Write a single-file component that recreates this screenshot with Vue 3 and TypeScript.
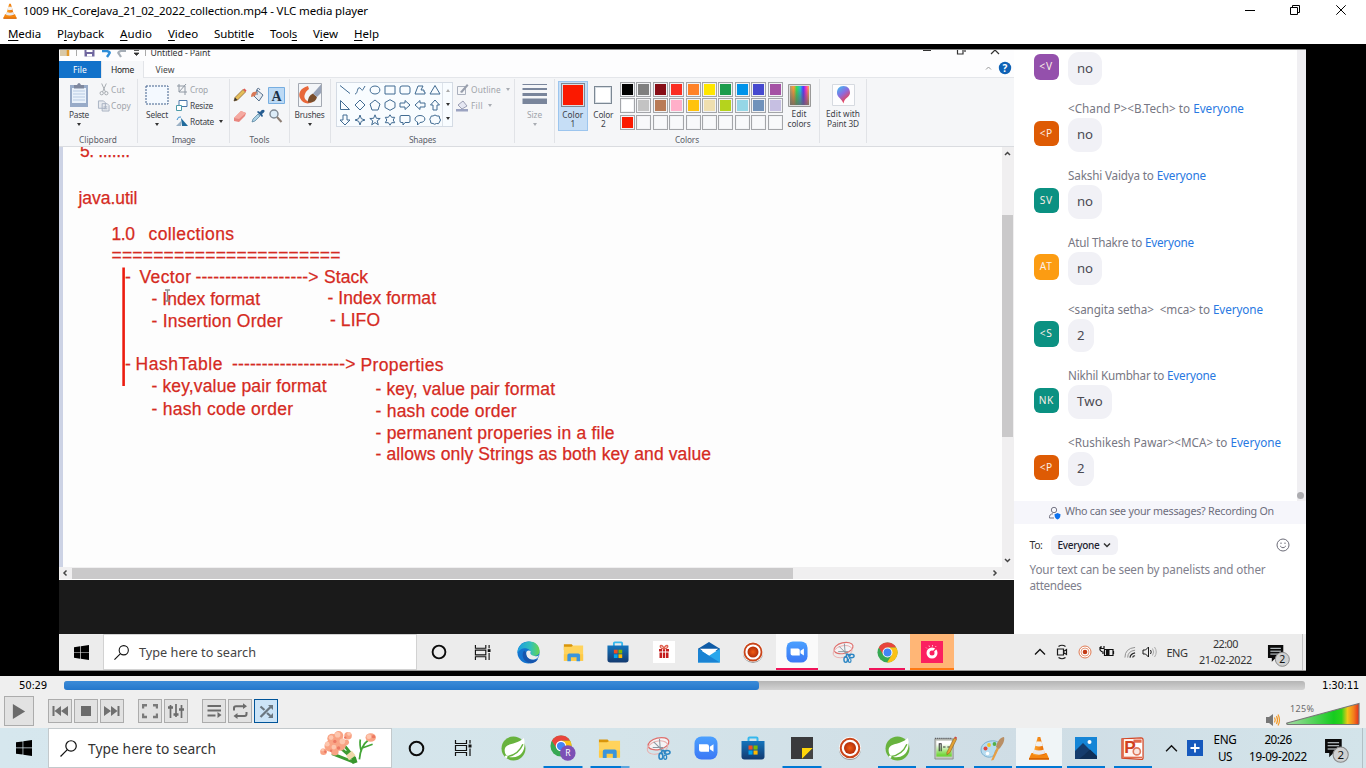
<script setup lang="ts">
interface MenuEntry { pre: string; key: string; post: string; w: number }
interface Message { who: string; initials: string; color: string; text: string; w: number; iw: number; tw: number }
interface TaskItem { icon: string; w: number; size: number; line?: number; state?: string }
interface Note { x: number; y: number; w: number; t: string }

// Spreads the letters of a label so that it takes exactly the given width.
const vFit = {
  mounted(el: HTMLElement, binding: { value: number }) {
    const count = (el.textContent || '').length
    const natural = el.getBoundingClientRect().width
    if (count > 0) el.style.letterSpacing = ((binding.value - natural) / count).toFixed(3) + 'px'
  },
}

const menu: MenuEntry[] = [
  { pre: '', key: 'M', post: 'edia', w: 33 },
  { pre: 'P', key: 'l', post: 'ayback', w: 47 },
  { pre: '', key: 'A', post: 'udio', w: 32 },
  { pre: '', key: 'V', post: 'ideo', w: 30 },
  { pre: 'Subti', key: 't', post: 'le', w: 40 },
  { pre: 'Tool', key: 's', post: '', w: 27 },
  { pre: 'V', key: 'i', post: 'ew', w: 25 },
  { pre: '', key: 'H', post: 'elp', w: 25 },
]

const messages: Message[] = [
  { who: '', initials: '<V', color: '#9450ac', text: 'no', w: 0, iw: 14, tw: 16 },
  { who: '<Chand P><B.Tech>', initials: '<P', color: '#de5b04', text: 'no', w: 176, iw: 13, tw: 16 },
  { who: 'Sakshi Vaidya', initials: 'SV', color: '#0b9182', text: 'no', w: 138, iw: 13, tw: 16 },
  { who: 'Atul Thakre', initials: 'AT', color: '#fc9c12', text: 'no', w: 126, iw: 13, tw: 16 },
  { who: '<sangita setha>  <mca>', initials: '<S', color: '#0b9182', text: '2', w: 195, iw: 13, tw: 8 },
  { who: 'Nikhil Kumbhar', initials: 'NK', color: '#0b9182', text: 'Two', w: 148, iw: 15, tw: 26 },
  { who: '<Rushikesh Pawar><MCA>', initials: '<P', color: '#de5b04', text: '2', w: 213, iw: 13, tw: 8 },
]

const palette: string[] = [
  '#000000', '#7f7f7f', '#870d16', '#fb2e22', '#ff8227', '#ffe600', '#1c9c4c', '#0093ea', '#4549cf', '#a552a5',
  '#ffffff', '#c3c3c3', '#b97b57', '#ffafc9', '#ffc30d', '#efdfaf', '#b5d31d', '#95d6e6', '#7092bb', '#c6bfe2',
  '#fb1900', '', '', '', '', '', '', '', '', '',
]

const notes: Note[] = [
  { x: 80, y: 157.3, w: 50, t: '5. .......' },
  { x: 78.5, y: 204.3, w: 59, t: 'java.util' },
  { x: 111.5, y: 240.2, w: 23.5, t: '1.0' },
  { x: 148.5, y: 240.2, w: 85.5, t: 'collections' },
  { x: 111.5, y: 260.6, w: 229, t: '======================' },
  { x: 125, y: 283, w: 6, t: '-' },
  { x: 139.5, y: 283, w: 51.5, t: 'Vector' },
  { x: 195.5, y: 283, w: 123, t: '------------------->' },
  { x: 324, y: 283, w: 44, t: 'Stack' },
  { x: 151.5, y: 304.7, w: 108.5, t: '- Index format' },
  { x: 327.5, y: 303.5, w: 108.5, t: '- Index format' },
  { x: 151.5, y: 326.5, w: 131, t: '- Insertion Order' },
  { x: 330, y: 325.6, w: 50, t: '- LIFO' },
  { x: 125, y: 369.7, w: 6, t: '-' },
  { x: 135.5, y: 369.7, w: 87, t: 'HashTable' },
  { x: 232, y: 370, w: 123.5, t: '------------------->' },
  { x: 360.5, y: 370.5, w: 83, t: 'Properties' },
  { x: 151.5, y: 391.5, w: 175, t: '- key,value pair format' },
  { x: 151.5, y: 414.5, w: 141.5, t: '- hash code order' },
  { x: 375.5, y: 395.4, w: 179.5, t: '- key, value pair format' },
  { x: 375.5, y: 416.6, w: 141, t: '- hash code order' },
  { x: 375.5, y: 438.5, w: 239, t: '- permanent properies in a file' },
  { x: 375.5, y: 460, w: 335.5, t: '- allows only Strings as both key and value' },
]

const innerTasks: TaskItem[] = [
  { icon: 'cortana', w: 43, size: 16 },
  { icon: 'taskview', w: 45, size: 17 },
  { icon: 'edge', w: 47, size: 23 },
  { icon: 'folder', w: 43, size: 21 },
  { icon: 'store', w: 46, size: 22 },
  { icon: 'gift', w: 45, size: 22 },
  { icon: 'mail', w: 45, size: 22 },
  { icon: 'record', w: 44, size: 22 },
  { icon: 'zoomapp', w: 44, size: 22, line: 42, state: 'active' },
  { icon: 'snip', w: 48, size: 23 },
  { icon: 'chrome', w: 40, size: 21, line: 36 },
  { icon: 'disc', w: 50, size: 22, line: 44, state: 'alert' },
]

const outerTasks: TaskItem[] = [
  { icon: 'cortana', w: 48, size: 17 },
  { icon: 'taskview', w: 46, size: 18 },
  { icon: 'spring', w: 54, size: 25 },
  { icon: 'chromeuser', w: 45, size: 26, line: 39 },
  { icon: 'folder', w: 49, size: 23, line: 39, state: 'multi' },
  { icon: 'snip', w: 49, size: 25 },
  { icon: 'zoomapp', w: 46, size: 24 },
  { icon: 'store', w: 48, size: 24 },
  { icon: 'sticky', w: 50, size: 22, line: 39 },
  { icon: 'record', w: 46, size: 24 },
  { icon: 'spring', w: 48, size: 25, line: 38 },
  { icon: 'npp', w: 48, size: 24, line: 38 },
  { icon: 'palette', w: 47, size: 25, line: 38 },
  { icon: 'cone', w: 46, size: 24, line: 46, state: 'active' },
  { icon: 'photos', w: 48, size: 22, line: 38 },
  { icon: 'ppt', w: 45, size: 23, line: 38 },
]

const controls: string[][] = [['prev', 'stop', 'next'], ['full', 'eq'], ['list', 'loop', 'shuffle']]

const shapes: string[] = [
  'M1 1.5 11 9.5', 'M1 10C4 10 3 2 6 4S7 9 11 2', 'M6 2C12.500 2 12.500 10 6 10S-.5 2 6 2Z', 'M1 2H11V10H1Z',
  'M3 2H9Q11 2 11 4V8Q11 10 9 10H3Q1 10 1 8V4Q1 2 3 2Z', 'M1 10 4 2H9L7 6H10V8H11V10Z', 'M6 1.500 11 10H1Z',
  'M1.500 1.500 10.500 10.500H1.500Z', 'M6 1 11 6 6 11 1 6Z', 'M6 1 11 5 9 11H3L1 5Z', 'M6 0.700 11 3.500V8.500L6 11.300 1 8.500V3.500Z',
  'M1 4H6V1.500L11 6 6 10.500V8H1Z', 'M11 4H6V1.500L1 6 6 10.500V8H11Z', 'M4 11V6H1.500L6 1 10.500 6H8V11Z',
  'M4 1V6H1L6 11 11 6H8V1Z', 'M6 1 7.300 4.700 11 6 7.300 7.300 6 11 4.700 7.300 1 6 4.700 4.700Z',
  'M6 .8 7.400 4.300 11.200 4.500 8.200 6.900 9.300 10.800 6 8.600 2.700 10.800 3.800 6.900 .8 4.500 4.600 4.300Z',
  'M6 .8 7.600 3.300H10.700L9.200 6 10.700 8.700H7.600L6 11.200 4.400 8.700H1.300L2.800 6 1.300 3.300H4.400Z',
  'M2 1.500H10Q11 1.500 11 3V7Q11 8.500 10 8.500H6L4 11V8.500H2Q1 8.500 1 7V3Q1 1.500 2 1.500Z',
  'M6 1.500C12.500 1.500 12.500 8.500 6 8.500L3.500 11 3.500 8C-1 6.500 1 1.500 6 1.500Z',
  'M4 2Q6 0 8 2 11 1 10.500 4 12.500 6 10.500 8 10 10.500 7.500 9.500 5.500 11 4 9.500 1 10 1.500 7 0 5 1.500 3.800 2 1 4 2Z',
]
</script>

<template>
  <div class="screen">
    <svg class="sprite" aria-hidden="true">
      <defs>
        <linearGradient id="gBlue" x1="0" y1="0" x2="0" y2="1"><stop offset="0" stop-color="#1474bc" /><stop offset="1" stop-color="#133a70" /></linearGradient>
        <linearGradient id="gEdge" x1="0" y1="0" x2="1" y2="0"><stop offset="0" stop-color="#1b9de2" /><stop offset=".6" stop-color="#34c1b8" /><stop offset="1" stop-color="#68d54e" /></linearGradient>
        <linearGradient id="gZoom" x1="0" y1="0" x2="0" y2="1"><stop offset="0" stop-color="#4aa0ff" /><stop offset="1" stop-color="#3c78f5" /></linearGradient>
        <linearGradient id="gRainbow"><stop offset="0" stop-color="#a97" /><stop offset=".2" stop-color="#f93" /><stop offset=".35" stop-color="#3d5" /><stop offset=".55" stop-color="#2bd" /><stop offset=".7" stop-color="#53f" /><stop offset=".85" stop-color="#f3b" /><stop offset="1" stop-color="#fa4" /></linearGradient>
        <linearGradient id="gFade" x1="0" y1="0" x2="0" y2="1"><stop offset=".1" stop-color="#555" stop-opacity="0" /><stop offset="1" stop-color="#666" stop-opacity=".8" /></linearGradient>
        <linearGradient id="gPin" x1="0" y1="0" x2=".6" y2="1"><stop offset="0" stop-color="#38c6f4" /><stop offset=".5" stop-color="#8a6be0" /><stop offset="1" stop-color="#ff3a3a" /></linearGradient>
        <linearGradient id="gCone" x1="0" y1="0" x2="1" y2="0"><stop offset="0" stop-color="#ffad33" /><stop offset="1" stop-color="#e76500" /></linearGradient>
        <linearGradient id="gVol"><stop offset="0" stop-color="#a6dca6" /><stop offset=".65" stop-color="#16cc20" /><stop offset=".76" stop-color="#2bd31a" /><stop offset=".84" stop-color="#f0c818" /><stop offset=".93" stop-color="#f37a1c" /><stop offset="1" stop-color="#e32c1c" /></linearGradient>
        <radialGradient id="gRec"><stop offset="0" stop-color="#f05c14" /><stop offset="1" stop-color="#b32d08" /></radialGradient>
        <linearGradient id="gNpp" x1="0" y1="0" x2="0" y2="1"><stop offset=".2" stop-color="#fff" /><stop offset=".9" stop-color="#72d63a" /></linearGradient>
      </defs>
      <symbol id="cone" viewBox="0 0 24 24">
        <path d="M4.500 17H19.500L22 22.500H2Z" fill="#f58610" /><path d="M2 22H22V23.800H2Z" fill="#d86400" />
        <path d="M10.700 1H13.300L18 18.500Q12 21 6 18.500Z" fill="url(#gCone)" />
        <path d="M9.500 5.500H14.500L15.800 9.800Q12 11.300 8.200 9.800Z" fill="#f1f1f1" /><path d="M7.200 13.500Q12 15.500 16.800 13.500L18 17.500Q12 19.800 6 17.500Z" fill="#e9e9ec" />
      </symbol>
      <symbol id="windows" viewBox="0 0 16 16"><path d="M0 2.300 6.600 1.400V7.600H0ZM7.300 1.300 16 0V7.600H7.300ZM0 8.300H6.600V14.600L0 13.700ZM7.300 8.300H16V16L7.300 14.700Z" fill="#000" /></symbol>
      <symbol id="loupe" viewBox="0 0 16 16"><circle cx="10.400" cy="5.600" r="4.900" fill="none" stroke="#111" stroke-width="1.150" /><path d="M6.900 9.100.5 15.500" stroke="#111" stroke-width="1.150" /></symbol>
      <symbol id="cortana" viewBox="0 0 16 16"><circle cx="8" cy="8" r="6.400" fill="none" stroke="#0c0c0c" stroke-width="1.900" /></symbol>
      <symbol id="taskview" viewBox="0 0 18 18"><path d="M1.500 1V4.500H12.500V1M1.500 17V13.500H12.500V17M1.500 6.500H12.500V11.500H1.500ZM16 1V4.500M16 9.500V17" fill="none" stroke="#111" stroke-width="1.200" /><path d="M14.500 5.500H17.500V8.500H14.500Z" fill="#111" /></symbol>
      <symbol id="spring" viewBox="0 0 24 24">
        <circle cx="12" cy="12" r="11.500" fill="#68b33e" />
        <path d="M22 2C24 10 22 20 11 20.500 6 20.500 3.500 18 3.500 14 3.500 6 14 9.500 22 2Z" fill="#fff" /><path d="M5 20C13 19 18 15 21 8" fill="none" stroke="#68b33e" stroke-width="1.400" /><circle cx="5" cy="20" r="1.200" fill="#fff" />
      </symbol>
      <symbol id="chrome" viewBox="0 0 24 24">
        <circle cx="12" cy="12" r="11.500" fill="#36a852" /><path d="M2 6.300A11.500 11.500 0 0 1 22 6.300L12 6.300 7.500 15Z" fill="#e8453c" /><path d="M12 6.300H22A11.500 11.500 0 0 1 11.500 23.500L17 14.700Z" fill="#fbc116" />
        <circle cx="12" cy="12" r="5.700" fill="#fff" /><circle cx="12" cy="12" r="4.500" fill="#4285f4" />
      </symbol>
      <symbol id="chromeuser" viewBox="0 0 26 26">
        <use href="#chrome" x="0" y="0" width="22" height="22" /><circle cx="17.800" cy="18" r="7.800" fill="#7c50b5" /><text x="17.800" y="21.200" font-size="8.500" font-family="Noto Sans, sans-serif" fill="#fff" text-anchor="middle">R</text>
      </symbol>
      <symbol id="folder" viewBox="0 0 24 24">
        <path d="M1 2.500H10L12 5V9H1Z" fill="#d9950a" /><path d="M1 5.500H9.500L12 4H23V21.500H1Z" fill="#ffd35c" /><path d="M1 14H23V21.500H1Z" fill="#ffca45" />
        <path d="M5 22V15Q5 13 7 13H17.500Q19.500 13 19.500 15V22H15.500V17.500H9V22Z" fill="#3b95dc" />
      </symbol>
      <symbol id="store" viewBox="0 0 24 24">
        <path d="M7.500 6V2.500Q7.500 1.500 8.500 1.500H15.500Q16.500 1.500 16.500 2.500V6" fill="none" stroke="#35b8ee" stroke-width="2" /><path d="M.5 5H23.500V20.500Q23.500 23.500 20.500 23.500H3.500Q.5 23.500.5 20.500Z" fill="url(#gBlue)" />
        <path d="M7.500 9.500H11.600V13.600H7.500Z" fill="#f25022" /><path d="M12.500 9.500H16.600V13.600H12.500Z" fill="#7fba00" /><path d="M7.500 14.500H11.600V18.600H7.500Z" fill="#00a4ef" /><path d="M12.500 14.500H16.600V18.600H12.500Z" fill="#ffb900" />
      </symbol>
      <symbol id="edge" viewBox="0 0 24 24">
        <circle cx="12" cy="12" r="11.500" fill="#1474cf" /><path d="M.6 11C2-3 24-3 23.500 11 23.500 16 16 17 14 14.500 16.500 11 12 7 7.500 7.500 4 8 1.500 10 .6 13Z" fill="url(#gEdge)" />
        <path d="M9.500 13C9.500 9.500 13 9 14.500 11 13.500 13 14 14.500 17 15.500 20 16.300 22 15.500 23 14.500 22 18 19 19.500 15.500 19.500 12 19.500 9.500 17 9.500 13Z" fill="#ececec" /><path d="M7.500 10C4 14 6 22 14 23.300 19 23 21 20.500 22 18.500 17 21.500 9 19 9.500 12Z" fill="#1656ae" />
      </symbol>
      <symbol id="gift" viewBox="0 0 22 22"><path d="M0 0H22V22H0Z" fill="#fff" /><path d="M6 8H16V10.500H6ZM6.500 11.500H15.500V17H6.500Z" fill="#c41c1c" /><path d="M11 8C7 8 6.500 4.500 8 4.500S10.500 6 11 8C11.500 6 12.500 4.500 14 4.500S15 8 11 8" fill="none" stroke="#e0604f" stroke-width="1.300" /><path d="M9.500 8V17M12.500 8V17" stroke="#fff" stroke-width=".8" /></symbol>
      <symbol id="mail" viewBox="0 0 24 24"><path d="M0 8.500 12 1 24 8.500V11H0Z" fill="#0f5ba6" /><path d="M2 8.500H22L12 17Z" fill="#fff" /><path d="M0 8.500 12 16 24 8.500V23.500H0Z" fill="#2aa7ec" /><path d="M0 8.500 15 18 24 23.500H0Z" fill="#1b83d3" /></symbol>
      <symbol id="record" viewBox="0 0 24 24"><circle cx="12" cy="13" r="11" fill="#999" /><circle cx="12" cy="12" r="11" fill="#fff" /><circle cx="12" cy="12" r="9.300" fill="none" stroke="#c9451a" stroke-width="2" /><circle cx="12" cy="12" r="6" fill="url(#gRec)" /></symbol>
      <symbol id="zoomapp" viewBox="0 0 24 24"><rect x=".5" y=".5" width="23" height="23" rx="7" fill="url(#gZoom)" /><path d="M5 8.200H13Q15 8.200 15 10.200V15.800H7Q5 15.800 5 13.800ZM15.800 10.700 19.500 8.200V15.800L15.800 13.300Z" fill="#fff" /></symbol>
      <symbol id="snip" viewBox="0 0 26 26">
        <ellipse cx="13" cy="8" rx="11" ry="6" fill="#f4f4f6" stroke="#df6f6c" stroke-width="1.300" transform="rotate(-14 13 8)" /><ellipse cx="12" cy="12" rx="11" ry="6.500" fill="none" stroke="#e9b0ae" stroke-width="1" transform="rotate(-16 12 12)" />
        <path d="M8 6 17 15M14 3 15 15M7 12 18 12" stroke="#8a97a0" stroke-width="1.100" /><path d="M17 14.500 15.500 19M17 14.500 21 17" stroke="#2c86c4" stroke-width="1.800" /><ellipse cx="15.500" cy="21" rx="2" ry="3.200" fill="none" stroke="#2c86c4" stroke-width="1.600" /><ellipse cx="22" cy="17" rx="3" ry="2" fill="none" stroke="#2c86c4" stroke-width="1.600" /><ellipse cx="20" cy="22" rx="1.500" ry="2.200" fill="none" stroke="#2c86c4" stroke-width="1.300" />
      </symbol>
      <symbol id="disc" viewBox="0 0 22 22"><path d="M0 0H22V22H0Z" fill="#fb2060" /><circle cx="11" cy="12" r="5.500" fill="#fff" /><circle cx="11" cy="12" r="2.500" fill="#fb2060" /><path d="M11 12 15.500 7" stroke="#fb2060" stroke-width="1.200" /><path d="M5 6.500 6 7.500M8 4.500 8.500 6M11.500 4V5.500M15 5 14.500 6" stroke="#ffb4ca" stroke-width="1" /></symbol>
      <symbol id="sticky" viewBox="0 0 22 22"><path d="M0 0H22V22H0Z" fill="#3a3a3c" /><path d="M11 11H22L11 22Z" fill="#ffd60a" /><path d="M22 11V22H11Z" fill="#444" /></symbol>
      <symbol id="npp" viewBox="0 0 25 25"><path d="M2 3H21V24H2Z" fill="#c5c9c1" stroke="#777" stroke-width=".7" /><path d="M3.500 5H19.500V21.500H3.500Z" fill="url(#gNpp)" /><path d="M2 2.500H20" stroke="#555" stroke-width="1.300" stroke-dasharray="1 1" /><path d="M6.500 16V8H8.500V16M10.500 11.500H13M15 11.500H17.500" fill="none" stroke="#333" stroke-width="1.100" /><path d="M14.500 17 22 2 24.500 3.500 17.500 17.500 14.500 19.500Z" fill="#e3a234" stroke="#8a5a18" stroke-width=".6" /><path d="M22 2 24.500 3.500 25 1.500 23 .5Z" fill="#cf4b42" /></symbol>
      <symbol id="palette" viewBox="0 0 25 25">
        <path d="M1 14C1 7 9 4 15 5 21 6 22 12 17 13 14 14 16 18 13 20 9 23 1 20 1 14Z" fill="#b7dcf0" stroke="#6ca6c8" stroke-width=".8" /><circle cx="5.500" cy="12.500" r="2" fill="#e1483c" /><circle cx="9" cy="9" r="1.900" fill="#f6c32c" /><circle cx="14.500" cy="8" r="1.900" fill="#52b04a" /><circle cx="7.500" cy="17.500" r="1.800" fill="#fff" /><path d="M11 24.500 17 11 19 12.500 13.500 24Z" fill="#e69f45" /><path d="M16 11C17 5 21 1 24 1 25 4 23 9 19 13Z" fill="#b98f65" />
      </symbol>
      <symbol id="photos" viewBox="0 0 22 22"><path d="M0 0H22V22H0Z" fill="#1585d6" /><path d="M0 14 8 6 22 20V22H0Z" fill="#153c6d" /><path d="M9 18 15 12.500 22 19V22H4Z" fill="#0f2f57" /><circle cx="14.500" cy="5" r="2" fill="#fff" /></symbol>
      <symbol id="ppt" viewBox="0 0 24 24"><path d="M1 2 21 .8Q23 .8 23 3V22Q23 23.500 21 23.300L1 22Z" fill="#fff" stroke="#d24625" stroke-width="1.300" /><path d="M1.500 2.500 13 2V21.800H1.500Z" fill="#fff4ef" /><path d="M1 2H3V22H1ZM13 2.500H21.500V6H13Z" fill="#e2694a" /><circle cx="16.500" cy="15" r="3.700" fill="#fbe6df" stroke="#e07a5c" stroke-width="1.700" /><path d="M3 20.500H22V22H3Z" fill="#e2694a" /><text x="3.500" y="17" font-size="18" font-weight="bold" font-family="Liberation Sans, sans-serif" fill="#d0401d">P</text></symbol>
      <symbol id="caret" viewBox="0 0 12 8"><path d="M1 6.500 6 1.500 11 6.500" fill="none" stroke="#111" stroke-width="1.300" /></symbol>
      <symbol id="notify" viewBox="0 0 24 24"><path d="M1 1H17V14.500H9L5 18.500V14.500H1Z" fill="#0b0b0b" /><path d="M3.500 4.500H14.500M3.500 7.500H14.500M3.500 10.500H14.500" stroke="#e0e8ec" stroke-width="1" /><circle cx="16" cy="16" r="7.300" fill="#cfd1d2" stroke="#888" stroke-width="1" /><text x="16" y="19.800" font-size="11" font-family="Noto Sans, sans-serif" fill="#111" text-anchor="middle">2</text></symbol>
      <symbol id="prev" viewBox="0 0 16 16"><path d="M.5 3H2.500V13H.5ZM2.500 8 9 3V13ZM9 8 16 3V13Z" fill="#707070" /></symbol>
      <symbol id="next" viewBox="0 0 16 16"><path d="M13.500 3H15.500V13H13.500ZM13.500 8 7 3V13ZM7 8 0 3V13Z" fill="#707070" /></symbol>
      <symbol id="stop" viewBox="0 0 16 16"><path d="M3 3H13V13H3Z" fill="#6b6b6b" /></symbol>
      <symbol id="full" viewBox="0 0 16 16"><path d="M1 5.500V2.200H5M11 2.200H15V5.500M15 10.500V14H11M5 14H1V10.500" fill="none" stroke="#7a7a7a" stroke-width="2.400" /></symbol>
      <symbol id="eq" viewBox="0 0 16 16"><path d="M2.500 2V15M8 1V14M13.500 2V15" stroke="#6b6b6b" stroke-width="1.700" /><path d="M0 4.500H5M5.500 11.500H10.500M11 6.500H16" stroke="#6b6b6b" stroke-width="2.500" /></symbol>
      <symbol id="list" viewBox="0 0 16 16"><path d="M1.500 3H15M1.500 7.500H15M1.500 12.500H9.500" stroke="#6b6b6b" stroke-width="2" /><path d="M11.500 9 15.500 12 11.500 15Z" fill="#6b6b6b" /></symbol>
      <symbol id="loop" viewBox="0 0 16 16"><path d="M2 7.500V5Q2 3.200 4 3.200H11.500M14.500 9V11Q14.500 13 12.500 13H4.500" fill="none" stroke="#6b6b6b" stroke-width="2" /><path d="M11 .3 15 3.200 11 6ZM5.500 10 1.500 13 5.500 16Z" fill="#6b6b6b" /></symbol>
      <symbol id="shuffle" viewBox="0 0 16 16"><path d="M2.500 14 12.500 4M2.500 3.500 6.500 7M9 10 12.500 13" fill="none" stroke="#6b7780" stroke-width="2.300" /><path d="M10 2H15V7ZM15 10V15H10Z" fill="#6b7780" /></symbol>
    </svg>

    <header class="title">
      <svg class="logo"><use href="#cone" /></svg>
      <div class="cap"><span v-fit="345">1009 HK_CoreJava_21_02_2022_collection.mp4 - VLC media player</span></div>
      <svg class="winctl" width="104" height="16" viewBox="0 0 104 16" fill="none" stroke="#000"><path d="M0 8.500H10M45.500 5.500H52.500V12.500H45.500ZM47.500 5.500V3.500H54.500V10.500H52.500M91.300 3.300 100.700 12.700M100.700 3.300 91.300 12.700" /></svg>
    </header>
    <nav class="menu"><div v-for="m in menu" :key="m.key"><span v-fit="m.w">{{ m.pre }}<u>{{ m.key }}</u>{{ m.post }}</span></div></nav>

    <main class="stage">
      <div class="video">
        <div class="upper">
          <section class="paint">
            <div class="quick">
              <svg width="955" height="12" viewBox="59 49 955 12">
                <path d="M60 49H69V55H60Z" fill="#d9c9a8" /><path d="M68 49 68 55" stroke="#e29a2b" stroke-width="2.500" /><path d="M76.500 49V55M145.500 49V55" stroke="#aaa" /><path d="M84.500 49H94.500V55.500H84.500Z" fill="#6f669f" /><path d="M86.500 49H92.500V51H86.500ZM87 53H92V55.500H87Z" fill="#fff" />
                <path d="M102 50H107Q111 51 109 53L107 56" fill="none" stroke="#2e8dd8" stroke-width="2.400" /><path d="M126 50H121Q117 51 119 53L121 56" fill="none" stroke="#a5adb6" stroke-width="2.200" /><path d="M134 49.500H139M134 52 136.500 54.500 139 52Z" fill="#333" stroke="#333" stroke-width=".8" />
                <text x="150.500" y="54.500" textLength="60" class="small">Untitled - Paint</text>
                <path d="M923 49.500H931M957.500 49V53H963V49M965 49V51M991 53 995 49 999 53" fill="none" stroke="#333" stroke-width="1.200" />
              </svg>
            </div>
            <div class="tabs">
              <div class="tab file"><span v-fit="14">File</span></div>
              <div class="tab home"><span v-fit="23">Home</span></div>
              <div class="tab"><span v-fit="19">View</span></div>
              <svg class="help" width="28" height="14" viewBox="0 0 28 14"><path d="M2 8.500 4.500 6 7 8.500" fill="none" stroke="#999" /><circle cx="21" cy="7" r="6.200" fill="#0f62b5" /><text x="21" y="10.500" class="q">?</text></svg>
            </div>
            <div class="ribbon">
              <div class="group clip">
                <div class="body">
                  <div class="big">
                    <svg width="22" height="26" viewBox="0 0 22 26"><path d="M2 3H20V25H2Z" fill="#98abc8" /><path d="M4 6H18V21H4Z" fill="#eaf2fb" /><path d="M5 9H17M5 12H17M5 15H17M5 18H17" stroke="#b8cbe3" /><path d="M6 3H9Q11-1 13 3H16V6.500H6Z" fill="#7f889e" /></svg>
                    <span v-fit="20">Paste</span><i class="arrow"></i>
                  </div>
                  <div class="rows muted">
                    <div class="row"><svg width="12" height="13" viewBox="0 0 13 13" fill="none" stroke="#a2a7ad"><path d="M4 0 8 9M9 0 5 9" /><circle cx="4" cy="10.500" r="1.800" /><circle cx="9" cy="10.500" r="1.800" /></svg><span v-fit="14">Cut</span></div>
                    <div class="row"><svg width="12" height="13" viewBox="0 0 13 13"><path d="M.5 1.500H6L8 3.500V9.500H.5ZM4.500 4.500H10L12 6.500V12.500H4.500Z" fill="#e8ebf0" stroke="#a6b0c0" /><path d="M6 8H10M6 10H10" stroke="#a6b0c0" /></svg><span v-fit="20">Copy</span></div>
                  </div>
                </div>
                <div class="foot"><span v-fit="38">Clipboard</span></div>
              </div>
              <div class="group image">
                <div class="body">
                  <div class="big"><svg width="24" height="26" viewBox="0 0 24 26"><path d="M1 4H23V22H1Z" fill="#f4f9ff" stroke="#41618c" stroke-dasharray="2 1" /></svg><span v-fit="22">Select</span><i class="arrow"></i></div>
                  <div class="rows">
                    <div class="row muted"><svg width="12" height="13" viewBox="0 0 12 13" fill="none" stroke="#8f98a3"><path d="M3 1V9H11M1 3H9V12M10 1 3 9" /></svg><span v-fit="18">Crop</span></div>
                    <div class="row"><svg width="12" height="13" viewBox="0 0 12 13" fill="#fff"><path d="M3 1.500H11V7.500H3Z" stroke="#4b77aa" /><path d="M.5 6.500H5.500V11.500H.5Z" stroke="#4c9aa8" /></svg><span v-fit="23">Resize</span></div>
                    <div class="row"><svg width="12" height="13" viewBox="0 0 12 13"><path d="M0 11 5 6V11Z" fill="#9bb1c5" /><path d="M5 3 12 11H6Z" fill="#206a9c" /><path d="M1 5Q2 1 5 2" fill="none" stroke="#3b8fd0" /></svg><span v-fit="24">Rotate</span><i class="arrow side"></i></div>
                  </div>
                </div>
                <div class="foot"><span v-fit="23">Image</span></div>
              </div>
              <div class="group tools">
                <div class="body toolgrid">
                  <svg viewBox="0 0 16 16"><path d="M2 14 3 10.500 11 2.500 13.500 5 5.500 13Z" fill="#e5bd58" stroke="#926b35" stroke-width=".8" /><path d="M2 14 3 10.500 5.500 13Z" fill="#333" /><path d="M11 2.500 13.500 5 14.500 3.500 12.500 1.500Z" fill="#df5650" /></svg>
                  <svg viewBox="0 0 16 16"><path d="M7 3 13 8 9 14 4 9Z" fill="#e5eaf0" stroke="#58718d" /><path d="M7 8V2Q9 0 10 3" fill="none" stroke="#58718d" /><path d="M1 10Q1 4 7 5L5 9Z" fill="#d87856" /></svg>
                  <svg class="pressed" viewBox="0 0 17 17"><path d="M.5 .5H16.500V16.500H.5Z" fill="#bddaf5" stroke="#77aee1" /><text x="8.500" y="13.500" class="serif">A</text></svg>
                  <svg viewBox="0 0 16 16"><path d="M2 10 9 3 14 5 13 8 7 14 2 13Z" fill="#e9867f" /><path d="M2 10 9 3 14 5 7 11Z" fill="#f5aaa2" /></svg>
                  <svg viewBox="0 0 16 16"><path d="M2 14 3 11 8 6 10 8 5 13Z" fill="#a9d0e5" stroke="#517e9a" stroke-width=".7" /><path d="M7 4 12 9 13 8 12 6Q16 3 14 2T10 4L8 3Z" fill="#265d91" /></svg>
                  <svg viewBox="0 0 16 16"><circle cx="6" cy="6" r="4" fill="#dcecf8" stroke="#7e8994" stroke-width="1.400" /><path d="M9 9 13.500 14" stroke="#8d7f76" stroke-width="2" /></svg>
                </div>
                <div class="foot"><span v-fit="20">Tools</span></div>
              </div>
              <div class="group brushes">
                <div class="body"><div class="big"><svg width="26" height="26" viewBox="0 0 26 26"><path d="M1.500 1.500H24.500V24.500H1.500Z" fill="#f3f5f8" stroke="#a4a9b2" /><path d="M11 4C3 6 1 12 3 16 5 21 11 23 15 20 9 20 6 16 8 12 9 9 11 8 12 7Z" fill="#e8673a" /><path d="M11 20.500Q10.500 14 16 11.500L20 15Q19 21 11 20.500Z" fill="#7a4e2c" /><path d="M16 11.500 24 2.500V11L20 15Z" fill="#98a3b8" /></svg><span v-fit="30">Brushes</span><i class="arrow"></i></div></div>
              </div>
              <div class="group shapes">
                <div class="body">
                  <div class="gallery">
                    <div class="grid"><svg v-for="(s, n) in shapes" :key="n" viewBox="0 0 12 12"><path :d="s" fill="none" stroke="#416b92" /></svg></div>
                    <div class="spin"><i class="arrow up"></i><i class="arrow"></i><i class="arrow more"></i></div>
                  </div>
                  <div class="rows muted">
                    <div class="row"><svg width="13" height="13" viewBox="0 0 13 13"><path d="M1.500 3.500H9.500V11.500H1.500Z" fill="none" stroke="#aab0bd" /><path d="M4 9 11 1 12.500 2.500 6 10Z" fill="#989eac" /></svg><span v-fit="30">Outline</span><i class="arrow side pale"></i></div>
                    <div class="row"><svg width="13" height="13" viewBox="0 0 13 13"><path d="M2 6 7 2 11 7 6 10Z" fill="#e5e7f2" stroke="#9b9fb4" /><path d="M0 10H12V12.500H0Z" fill="#9ba3c1" /></svg><span v-fit="12">Fill</span><i class="arrow side pale"></i></div>
                  </div>
                </div>
                <div class="foot"><span v-fit="27">Shapes</span></div>
              </div>
              <div class="group size muted"><div class="body"><div class="big"><svg width="26" height="26" viewBox="0 0 26 26" fill="#79859b"><path d="M.5 2H25V3H.5ZM.5 6H25V8H.5ZM.5 11H25V14H.5ZM.5 16.500H25V22H.5Z" /></svg><span v-fit="15">Size</span><i class="arrow pale"></i></div></div></div>
              <div class="group colors">
                <div class="body">
                  <div class="colorbtn chosen"><div class="well one"></div><span v-fit="21">Color</span><b>1</b></div>
                  <div class="colorbtn"><div class="well two"></div><span v-fit="20">Color</span><b>2</b></div>
                  <div class="swatches"><div v-for="(c, n) in palette" :key="n" class="cell"><i :style="{ background: c || '#f8f9fb' }"></i></div></div>
                  <div class="big two-line"><svg width="23" height="24" viewBox="0 0 23 24"><path d="M.5.500H22.500V22.500H.5Z" fill="#ddd" stroke="#999" /><path d="M2 2H21V21H2Z" fill="url(#gRainbow)" /><path d="M2 2H21V21H2Z" fill="url(#gFade)" /></svg><span v-fit="15">Edit</span><span v-fit="23">colors</span></div>
                </div>
                <div class="foot"><span v-fit="24">Colors</span></div>
              </div>
              <div class="group three"><div class="body"><div class="big two-line"><svg width="23" height="24" viewBox="0 0 23 24"><path d="M.5.5H22.500V21.500H.5Z" fill="#fdfdfe" stroke="#d6dae0" /><path d="M11.500 2C16 2 18 5 18 9 18 13 12 14 11.500 19.500 10 15 5 13 5 9 5 5 7 2 11.500 2Z" fill="url(#gPin)" /></svg><span v-fit="34">Edit with</span><span v-fit="32">Paint 3D</span></div></div></div>
            </div>
            <div class="sheet">
              <svg class="canvas" width="943" height="420" viewBox="59 147 943 420">
                <path d="M59 147H63V567H59Z" fill="#cdd3e5" /><path d="M122.300 267.500H124.900V386H122.300Z" fill="#ec1c10" />
                <text v-for="(n, i) in notes" :key="i" :x="n.x" :y="n.y" :textLength="n.w" class="note" xml:space="preserve">{{ n.t }}</text>
                <path d="M165 290H170M167.500 290V301M165 301H170" fill="none" stroke="#8d8d8d" stroke-width="1.300" />
              </svg>
              <div class="vbar">
                <svg width="12" height="12" viewBox="0 0 12 12"><path d="M3 8 5.500 5.500 8 8" fill="none" stroke="#444" stroke-width="1.500" /></svg>
                <div class="vthumb"></div>
                <svg width="12" height="12" viewBox="0 0 12 12"><path d="M3 4 5.500 6.500 8 4" fill="none" stroke="#444" stroke-width="1.500" /></svg>
              </div>
            </div>
            <div class="hbar">
              <svg width="13" height="12" viewBox="0 0 13 12"><path d="M7.500 3.500 5 6 7.500 8.500" fill="none" stroke="#444" stroke-width="1.500" /></svg>
              <div class="hthumb"></div>
              <svg width="12" height="12" viewBox="0 0 12 12"><path d="M3.500 3.500 6 6 3.500 8.500" fill="none" stroke="#444" stroke-width="1.500" /></svg>
            </div>
            <div class="desk"></div>
          </section>

          <aside class="chat">
            <div class="log">
              <div class="msgs">
                <div v-for="(m, n) in messages" :key="n" class="msg">
                  <div v-if="m.who" class="who"><span v-fit="m.w">{{ m.who }} to <em>Everyone</em></span></div>
                  <div class="line">
                    <div class="avatar" :style="{ background: m.color }"><span v-fit="m.iw">{{ m.initials }}</span></div>
                    <div class="bubble"><span v-fit="m.tw">{{ m.text }}</span></div>
                  </div>
                </div>
              </div>
              <div class="track"><i></i></div>
            </div>
            <div class="banner"><svg width="14" height="14" viewBox="0 0 14 14"><circle cx="6" cy="4" r="2.700" fill="none" stroke="#777786" /><path d="M6 12H1.500Q1 8 5 7.800" fill="none" stroke="#777786" /><path d="M6.500 8.200 9.500 7 12.500 8.200Q12.500 12.500 9.500 13.500 6.500 12.500 6.500 8.200Z" fill="#0e72ed" /></svg><span v-fit="209">Who can see your messages? Recording On</span></div>
            <div class="to"><span v-fit="13">To:</span><div class="pick"><span v-fit="42">Everyone</span><svg width="8" height="6" viewBox="0 0 8 6"><path d="M1 1.500 4 4.500 7 1.500" fill="none" stroke="#333" stroke-width="1.500" /></svg></div>
              <svg class="smile" width="14" height="14" viewBox="0 0 14 14" fill="none" stroke="#6c6c78"><circle cx="7" cy="7" r="6" /><path d="M4.200 8Q7 11.500 9.800 8" /><path d="M5 4.500V6M9 4.500V6" /></svg>
            </div>
            <div class="hint"><div><span v-fit="236">Your text can be seen by panelists and other</span></div><div><span v-fit="52">attendees</span></div></div>
          </aside>
        </div>

        <div class="bar inner">
          <div class="start"><svg width="15" height="15"><use href="#windows" /></svg></div>
          <div class="search"><svg width="15" height="15"><use href="#loupe" /></svg><span v-fit="117">Type here to search</span></div>
          <div v-for="(t, n) in innerTasks" :key="n" class="task" :class="t.state" :style="{ width: t.w + 'px' }"><svg :width="t.size" :height="t.size"><use :href="'#' + t.icon" /></svg><i v-if="t.line" :style="{ width: t.line + 'px' }"></i></div>
          <div class="tray">
            <svg width="12" height="8"><use href="#caret" /></svg>
            <svg width="12" height="16" viewBox="0 0 12 16" fill="none" stroke="#1a1a1a" stroke-width="1.200"><path d="M2.500 2.500Q6 0 9.500 2.500M2.500 13.500Q6 16 9.500 13.500M1.500 5H7.500V11H1.500ZM7.500 7.500 10.500 5.500V10.500L7.500 8.500" /></svg>
            <svg width="14" height="14" viewBox="0 0 14 14"><circle cx="7" cy="7" r="6" fill="#fff" stroke="#e07a52" /><circle cx="7" cy="7" r="4" fill="none" stroke="#e59a7c" /><circle cx="7" cy="7" r="2.300" fill="#c23b16" /></svg>
            <svg class="batt" width="15" height="12" viewBox="0 0 15 12"><path d="M4.500 3.500H13V9.500H4.500ZM13.500 5V8" fill="none" stroke="#111" stroke-width="1.200" /><path d="M6 4H9.500V9H6Z" fill="#111" /><path d="M0 1V4Q1.500 6 3 6V8M1 0V2.500H4V0" fill="none" stroke="#111" stroke-width="1.200" /></svg>
            <svg width="12" height="13" viewBox="0 0 13 13" fill="none" stroke="#8b8b8b"><path d="M1 12Q1 2 12 1M4 12Q4 5 12 4" /><path d="M6.500 12Q7 8 12 7M9.500 12Q9.500 10 12 10" stroke="#222" stroke-width="1.300" /></svg>
            <svg class="vol" width="15" height="14" viewBox="0 0 15 14" fill="none" stroke="#1a1a1a"><path d="M1 5H3.500L6.500 2V12L3.500 9H1Z" /><path d="M8.500 5Q10 7 8.500 9" /><path d="M10.500 3.500Q13 7 10.500 10.500M12.500 2Q16 7 12.500 12" stroke="#aaa" /></svg>
            <span v-fit="21">ENG</span>
            <div class="clock"><div><span v-fit="25">22:00</span></div><div><span v-fit="53">21-02-2022</span></div></div>
            <svg class="bell" width="23" height="23"><use href="#notify" /></svg>
          </div>
        </div>
      </div>
    </main>

    <section class="player">
      <div class="progress"><div class="t1"><span v-fit="28">50:29</span></div><div class="seek"><div class="done"></div></div><div class="t2"><span v-fit="37">1:30:11</span></div></div>
      <div class="buttons">
        <button class="btn play"><svg width="14" height="17" viewBox="0 0 16 18" preserveAspectRatio="none"><path d="M1 1 15 9 1 17Z" fill="#6b6b6b" /></svg></button>
        <div v-for="(g, n) in controls" :key="n" class="set"><button v-for="b in g" :key="b" class="btn" :class="b"><svg width="16" height="16"><use :href="'#' + b" /></svg></button></div>
        <div class="volume">
          <svg width="15" height="14" viewBox="0 0 15 14"><path d="M0 4H3L7 1V13L3 10H0Z" fill="#777" /><path d="M8.500 4.500Q10 7 8.500 9.500M10.500 3Q12.500 7 10.500 11M12 1.500Q15 7 12 12.500" fill="none" stroke="#f49a26" stroke-width="1.200" /></svg>
          <svg width="76" height="26" viewBox="1285 701 76 26"><path d="M1287 723 1359 703.500V723.500Q1359 724.500 1358 724.500H1288Q1286 724 1287 723Z" fill="url(#gVol)" stroke="#777" stroke-width="1.200" /><text x="1290" y="712" textLength="24" class="pct">125%</text></svg>
        </div>
      </div>
    </section>

    <footer class="bar outer">
      <div class="start"><svg width="16" height="16"><use href="#windows" /></svg></div>
      <div class="search"><svg width="17" height="17"><use href="#loupe" /></svg><span v-fit="128">Type here to search</span>
        <svg class="flowers" width="60" height="34" viewBox="0 0 62 36">
          <path d="M22 18 37 31M25 14 37 29M13 24 36 33M28 21 38 33" stroke="#3c9b31" stroke-width="3" /><path d="M42 30Q43 16 52 9M44 22Q42 14 43 9M45 18 56 14" fill="none" stroke="#43a536" stroke-width="1.800" /><path d="M28 26 34 21 38 26 31 31Z" fill="#efd7a8" /><path d="M33 31 38 27 40 33 35 35Z" fill="#37962c" />
          <g fill="#f9a384"><circle cx="13" cy="8" r="5" /><circle cx="20" cy="5" r="5" /><circle cx="11" cy="16" r="6" /><circle cx="21" cy="14" r="7" /><circle cx="4" cy="22" r="3.500" /><circle cx="16" cy="22" r="4" /><circle cx="30" cy="5" r="4" /><ellipse cx="54" cy="7" rx="5.500" ry="4.500" /><circle cx="28" cy="12" r="3" /></g>
          <g fill="#fdc6ae"><circle cx="12" cy="7" r="2.500" /><circle cx="19" cy="4" r="3" /><circle cx="8" cy="14" r="2.500" /><circle cx="24" cy="11" r="3" /><circle cx="15" cy="17" r="2.500" /><circle cx="3" cy="20" r="1.500" /><circle cx="31" cy="3" r="2" /><circle cx="52" cy="6" r="2.500" /></g>
          <g fill="#ec7963"><circle cx="16" cy="11" r="1.800" /><circle cx="6" cy="22" r="1.300" /><circle cx="20" cy="18" r="1.800" /><circle cx="27" cy="7" r="1.300" /><circle cx="12" cy="21" r="1.300" /><circle cx="57" cy="6" r="1.800" /></g>
        </svg>
      </div>
      <div v-for="(t, n) in outerTasks" :key="n" class="task" :class="t.state" :style="{ width: t.w + 'px' }"><svg :width="t.size" :height="t.size"><use :href="'#' + t.icon" /></svg><i v-if="t.line" :style="{ width: t.line + 'px' }"></i></div>
      <div class="tray">
        <svg width="13" height="9"><use href="#caret" /></svg>
        <svg class="plus" width="16" height="16" viewBox="0 0 16 16"><path d="M0 0H16V16H0Z" fill="#1659bd" /><path d="M8 3.500V12.500M3.500 8H12.500" stroke="#fff" stroke-width="1.800" /></svg>
        <div class="lang"><div><span v-fit="23">ENG</span></div><div><span v-fit="14">US</span></div></div>
        <div class="clock"><div><span v-fit="27">20:26</span></div><div><span v-fit="58">19-09-2022</span></div></div>
        <svg class="bell" width="25" height="25"><use href="#notify" /></svg>
      </div>
    </footer>
  </div>
</template>

<style>
html, body { margin: 0; overflow: hidden; background: #fff; }
</style>

<style scoped>
.screen { width: 1366px; height: 768px; overflow: hidden; display: flex; flex-direction: column; font-family: "Noto Sans", "Open Sans", sans-serif; color: #000; background: #fff; }
.screen * { box-sizing: border-box; }
.screen div > span, .tray > span { display: inline-block; white-space: pre; flex: none; }
svg { display: block; flex: none; overflow: visible; }
.sprite { position: absolute; width: 0; height: 0; }
.title { height: 24px; display: flex; align-items: flex-start; padding-left: 2px; font-size: 11.500px; }
.title .logo { width: 16px; height: 16px; margin: 3px 5px 0 0; }
.cap { line-height: 22px; height: 22px; flex: 1; }
.winctl { margin: 2px 17px 0 0; }
.menu { height: 20px; display: flex; gap: 16px; padding-left: 8px; font-size: 11.500px; line-height: 19px; }
.menu u { text-underline-offset: 2px; }
.stage { height: 632px; background: #000; padding: 5px 60px 5px 59px; }
.video { width: 1247px; height: 622px; display: flex; flex-direction: column; }
.upper { display: flex; height: 585px; }
.paint { width: 955px; display: flex; flex-direction: column; background: #fdfdfe; }
.quick { height: 12px; overflow: hidden; border-top: 1px solid #8a8a8a; }
.small { font-size: 8.700px; font-family: "Noto Sans", sans-serif; fill: #333; }
.tabs { height: 17px; display: flex; font-size: 8.500px; line-height: 17px; color: #444; border-bottom: 1px solid #e4e6ea; }
.tab { width: 42px; text-align: center; height: 17px; }
.file { background: #1272ca; color: #fff; }
.home { width: 43px; background: #f6f7f9; border: 1px solid #e2e4e8; border-width: 0 1px; color: #222; }
.help { margin: 0 2px 0 auto; }
.q { font: bold 10px "Noto Sans", sans-serif; fill: #fff; text-anchor: middle; }
.ribbon { height: 69px; background: #f5f6f8; border-bottom: 1px solid #dadce0; display: flex; font-size: 8.300px; color: #3d4249; padding: 1px 0 3px; }
.group { border-right: 1px solid #e1e3e7; height: 64px; display: flex; flex-direction: column; align-items: center; flex: none; }
.body { height: 55px; width: 100%; display: flex; flex: none; }
.foot { height: 11px; line-height: 11px; color: #5b6068; flex: none; }
.clip { width: 79px; } .image { width: 92px; } .tools { width: 60px; } .brushes { width: 41px; } .shapes { width: 184px; } .size { width: 40px; } .colors { width: 265px; } .three { width: 47px; }
.muted { color: #a0a4aa; }
.big { display: flex; flex-direction: column; align-items: center; width: 38px; padding-top: 3px; line-height: 10px; }
.big > span { margin-top: 2px; }
.brushes .big, .size .big { width: 100%; }
.brushes .big { padding-right: 1px; }
.clip .big { width: 40px; }
.two-line { width: 42px; padding-top: 5px; }
.two-line > span { margin-top: 0; height: 9.500px; }
.two-line > svg + span { margin-top: 1px; }
.three .two-line { width: 46px; }
.arrow { display: block; width: 0; height: 0; border: 2.500px solid transparent; border-top: 3px solid #333; border-bottom: 0; margin-top: 3px; }
.side { margin: 0 0 0 3px; }
.pale { border-top-color: #a8acb2; }
.rows { display: flex; flex-direction: column; padding-top: 2px; }
.row { height: 16.400px; display: flex; align-items: center; gap: 2px; line-height: 13px; }
.clip .row { gap: 1px; }
.clip .rows { margin-left: -1px; }
.toolgrid { display: grid; grid-template-columns: 17px 17px 17px; grid-template-rows: 17px 17px; justify-content: center; align-content: start; gap: 4px 1px; padding: 8px 2px 0 0; }
.toolgrid svg { width: 16px; height: 16px; }
.toolgrid .pressed { width: 17px; height: 17px; }
.serif { font: bold 14px "Liberation Serif", serif; fill: #1b3147; text-anchor: middle; }
.gallery { width: 117px; height: 45px; margin: 3px 3px 0 5px; border: 1px solid #d4dbe4; background: #f8fcff; display: flex; }
.gallery .grid { display: grid; grid-template-columns: repeat(7, 15px); grid-template-rows: repeat(3, 15px); width: 106px; align-items: center; justify-items: center; height: 43px; align-content: center; }
.grid svg { width: 12px; height: 12px; }
.spin { border-left: 1px solid #dde3ea; width: 11px; display: flex; flex-direction: column; align-items: center; justify-content: space-around; }
.spin .arrow { margin: 0; }
.spin .up { transform: rotate(180deg); border-top-color: #aaa; }
.spin .more { box-shadow: 0 -4px 0 -3px #333; }
.colorbtn { width: 31px; height: 50px; margin: 2px 0 0 3px; display: flex; flex-direction: column; align-items: center; line-height: 9.500px; }
.colorbtn + .colorbtn { margin-left: 1px; }
.colorbtn b { font-weight: 400; margin-top: -.5px; }
.chosen { background: #c6def6; border: 1px solid #9cc5ee; }
.well { width: 24px; height: 24px; margin: 2px 0 3px; background: #fb1900; border: 1px solid #7c8894; box-shadow: inset 0 0 0 1px #d7dde3; }
.two { width: 18px; height: 18px; background: #fff; margin: 5px 0 6px; }
.colors .chosen .well { margin-top: 1px; }
.swatches { display: grid; grid-template-columns: repeat(10, 16.400px); grid-template-rows: repeat(3, 16.400px); width: 165px; margin: 3px 0 0 2px; flex: none; }
.cell { width: 15px; height: 15px; border: 1px solid #a3a5a9; padding: 1px; background: #f2f3f5; }
.cell i { display: block; height: 11px; }
.colors .two-line { margin-left: -6px; }
.sheet { height: 420px; display: flex; background: #fdfdfd; }
.canvas { overflow: hidden; }
.note { font-family: "Liberation Sans", Arial, sans-serif; font-size: 17.500px; fill: #d52a22; stroke: #d52a22; stroke-width: .25px; white-space: pre; }
.vbar { width: 12px; background: #f0eff0; display: flex; flex-direction: column; }
.vthumb { width: 11px; height: 222px; background: #cac9ca; margin-top: 56px; margin-bottom: auto; }
.hbar { height: 13px; background: #f0eff0; display: flex; align-items: center; border-bottom: 1px solid #fff; }
.hthumb { width: 721px; height: 11px; background: #cac9ca; margin-right: auto; }
.hbar svg:last-child { margin-right: 12px; }
.desk { height: 54px; background: #1a1a1a; }
.chat { width: 292px; background: #fff; display: flex; flex-direction: column; border-top: 1px solid #888; }
.log { height: 451px; display: flex; justify-content: space-between; }
.msgs { padding-top: 1.500px; }
.msg { height: 66.750px; display: flex; flex-direction: column; justify-content: flex-end; }
.msg:first-child { height: 33.500px; }
.who { font-size: 11.700px; line-height: 15px; color: #777783; padding-left: 54px; height: 17px; }
.who em { font-style: normal; color: #2878e2; }
.line { display: flex; padding-left: 19.500px; gap: 9px; height: 33.500px; align-items: flex-start; }
.avatar { width: 25.500px; height: 25.500px; border-radius: 6px; color: #fbeee6; font-size: 10.200px; line-height: 24px; text-align: center; margin-top: 2.500px; }
.bubble { background: #f1f1f6; border-radius: 11px; padding: 0 9px; font-size: 13.200px; line-height: 33px; color: #4a4a52; height: 33.500px; }
.track { width: 9px; background: #f0eff2; display: flex; align-items: flex-end; }
.track i { width: 7px; height: 7px; border-radius: 50%; background: #acacb0; margin-bottom: 2px; }
.banner { height: 23px; background: #f6f6fb; display: flex; align-items: center; padding-left: 34px; gap: 3px; font-size: 10.700px; color: #6d6d7b; line-height: 21px; }
.banner > span { margin-top: -2px; }
.to { height: 42px; display: flex; align-items: center; padding-left: 15.500px; font-size: 10.500px; color: #333; }
.to > span { margin-top: -1px; }
.pick { margin-left: 8px; width: 67px; height: 20px; border-radius: 6px; background: #f1f1f6; display: flex; align-items: center; padding-left: 7px; gap: 3px; font-size: 10px; font-weight: 500; color: #222230; }
.smile { margin-left: auto; margin-right: 16px; }
.hint { font-size: 11.700px; line-height: 15.500px; color: #80808c; padding-left: 15.500px; margin-top: -4px; }
.bar { display: flex; position: relative; }
.start, .search, .task { display: flex; align-items: center; flex: none; }
.start { justify-content: center; }
.inner { height: 37px; background: #ececec; border-bottom: 1px solid #999; }
.inner .start { width: 44px; }
.inner .search { width: 314px; background: #fff; border: 1px solid #d2d2d2; padding-left: 10px; font-size: 12.700px; color: #444; gap: 10px; }
.task { justify-content: center; position: relative; }
.task > i { position: absolute; bottom: 0; left: 50%; transform: translateX(-50%); height: 2px; background: #0078d4; }
.inner .task > i { background: #f0145a; }
.inner .active { background: linear-gradient(#fafafa, #fafafa) center / 42px 100% no-repeat; }
.inner .alert { background: linear-gradient(#ffb676, #ffb676) center / 44px 100% no-repeat; }
.inner .alert > i { background: #ff7a14; }
.tray { display: flex; align-items: center; margin-left: auto; }
.inner .tray { border-right: 1px solid #c2c2c2; margin-right: 3px; font-size: 11px; color: #333; gap: 9px; flex: none; width: 269px; }
.inner .tray > svg + svg { margin-left: .8px; }
.inner .tray > .batt { margin-left: -1px; }
.inner .tray > .vol { margin-left: -3px; }
.clock { text-align: center; }
.inner .clock { font-size: 10.800px; line-height: 16px; width: 54px; margin-left: 2px; }
.inner .tray .bell { margin-left: 6px; margin-top: 6px; }
.outer { height: 40px; background: linear-gradient(90deg, #d6e7ee, #d4e4ea 45%, #cfdde5 75%, #d3e4ea); }
.outer .start { width: 48px; }
.outer .search { width: 344px; background: #fff; border: 1px solid #c3c9cc; padding-left: 11px; font-size: 13.800px; color: #333; gap: 11px; }
.flowers { margin-left: auto; margin-right: 12px; margin-top: -1px; }
.outer .active { background: #f0f5f7; }
.outer .multi > i { background: linear-gradient(90deg, #0078d4 31px, #5aa6df 31px); }
.outer .tray { width: 198px; margin-right: 3px; border-right: 1px solid #b3c0c6; font-size: 11.700px; }
.outer .plus { margin-left: 9px; }
.lang { text-align: center; line-height: 17px; width: 24px; margin-left: 10px; }
.outer .clock { line-height: 17px; width: 60px; margin-left: 11px; }
.outer .bell { margin-left: 16px; margin-top: 5px; }
.player { height: 52px; background: #efefef; }
.progress { height: 20px; display: flex; line-height: 20px; font-family: "DejaVu Sans", sans-serif; font-size: 10.200px; }
.t1 { width: 64px; padding-left: 19px; }
.seek { width: 1241px; height: 9px; margin-top: 4.500px; border-radius: 3px; background: linear-gradient(#b5b5b5, #d3d3d3); }
.done { width: 695px; height: 9px; border-radius: 3px; background: linear-gradient(#3b8bd8, #2477cb); }
.t2 { padding-left: 17px; }
.buttons { height: 32px; display: flex; align-items: center; padding-left: 4px; gap: 14px; margin-top: -1px; }
.set { display: flex; gap: 2px; }
.btn { width: 24px; height: 24px; padding: 0; border: 1px solid #acacac; background: #e2e2e2; display: flex; align-items: center; justify-content: center; flex: none; }
.play { width: 30px; height: 30px; }
.shuffle { background: #cce4f7; border-color: #005499; }
.volume { display: flex; align-items: flex-end; gap: 4px; margin-left: auto; margin-right: 5px; margin-top: 6px; }
.pct { font: 9px "Noto Sans", sans-serif; fill: #6b6b6b; }
</style>
